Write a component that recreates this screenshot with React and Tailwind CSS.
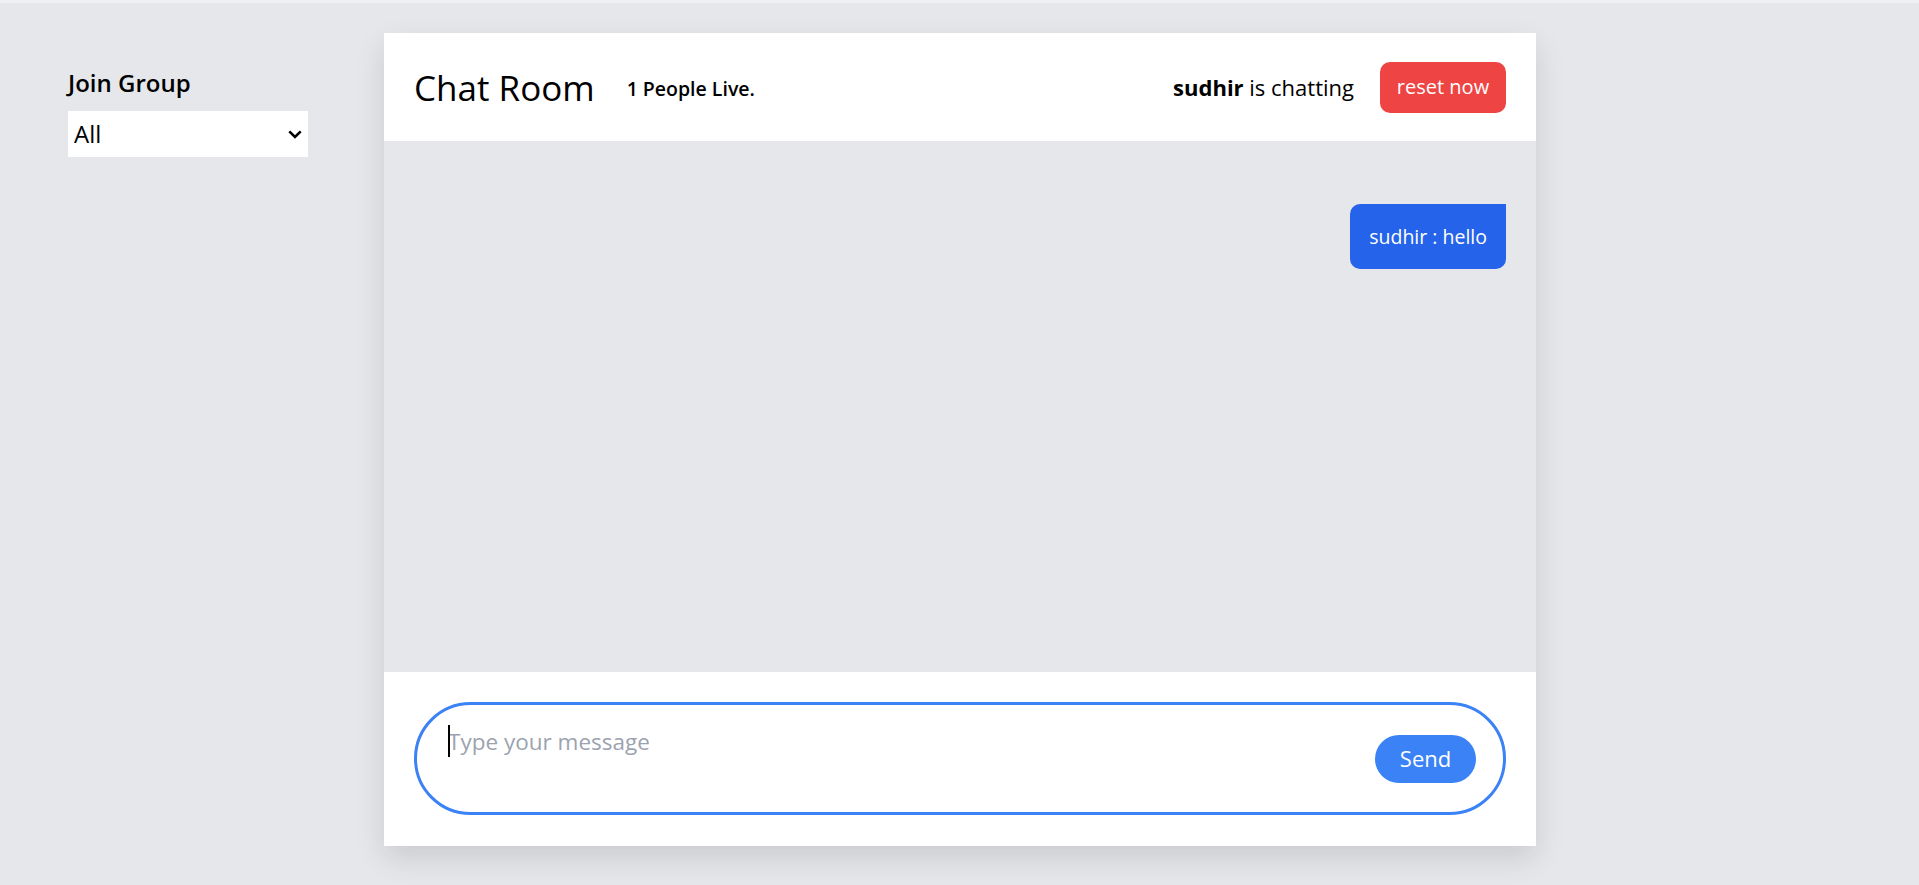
import React from "react";

export default function App() {
  return (
    <div className="min-h-screen w-full bg-[#e5e7eb] flex flex-col" style={{ fontFamily: '"Open Sans", "Noto Sans", sans-serif' }}>
      <div className="h-[3px] w-full bg-[#eef0f3]" />
      <div className="flex pl-[68px] pt-[30px]">
        <div className="w-[316px] shrink-0 pt-[32px]">
          <div className="text-[24px] leading-[35px] font-semibold text-black">Join Group</div>
          <div className="relative mt-[11px] w-[240px] h-[46px] bg-white">
            <select className="appearance-none w-full h-full bg-white pl-[6px] text-[24px] text-black outline-none">
              <option>All</option>
            </select>
            <svg className="pointer-events-none absolute left-[220px] top-[19px]" width="14" height="9" viewBox="0 0 14 9" fill="none">
              <path d="M1.3 1.3 L7 7 L12.7 1.3" stroke="#000" strokeWidth="2.6" />
            </svg>
          </div>
        </div>
        <div className="w-[1152px] shrink-0 bg-white shadow-[0_12px_28px_rgba(0,0,0,0.12)] flex flex-col">
          <div className="h-[108px] flex items-center px-[30px]">
            <div className="text-[35px] leading-none text-black">Chat Room</div>
            <div className="ml-[32px] mt-[4px] text-[19.5px] font-semibold text-black">1 People Live.</div>
            <div className="ml-auto text-[22px] text-black">
              <span className="font-bold">sudhir</span> is chatting
            </div>
            <button className="ml-[26px] w-[126px] h-[51px] rounded-[10px] bg-[#ef4444] text-white text-[20px]">reset now</button>
          </div>
          <div className="h-[531px] bg-[#e5e7eb] flex flex-col items-end pt-[63px] pr-[30px]">
            <div className="h-[65px] px-[19px] flex items-center rounded-[10px] rounded-tr-none bg-[#2563eb] text-white text-[19.5px]">
              sudhir : hello
            </div>
          </div>
          <div className="pt-[30px] pb-[31px] px-[30px]">
            <div className="relative h-[113px] rounded-full border-[3px] border-[#3b82f6] flex items-center pl-[31px] pr-[27px]">
              <div className="absolute left-[31px] top-[20px] w-[2px] h-[32px] bg-black" />
              <textarea
                className="flex-1 h-full resize-none outline-none bg-transparent pt-[20px] text-[22.5px] leading-[33px] placeholder:text-[#9ca3af] caret-transparent"
                placeholder="Type your message"
              />
              <button className="w-[101px] h-[48px] rounded-full bg-[#3b82f6] text-white text-[22px]">Send</button>
            </div>
          </div>
        </div>
      </div>
    </div>
  );
}
